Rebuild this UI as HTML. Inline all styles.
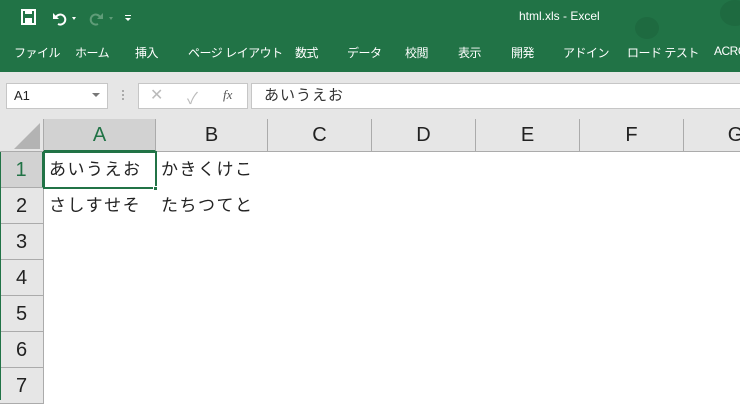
<!DOCTYPE html><html><head><meta charset="utf-8"><style>
*{margin:0;padding:0;box-sizing:border-box}
body{width:740px;height:400px;overflow:hidden;background:#fff;font-family:"Liberation Sans","Noto Sans CJK JP",sans-serif;position:relative}
.a{position:absolute}
.g{background:#217346;left:0;top:0;width:740px;height:72px}
.t{color:#fff;font-size:12px;top:44px;letter-spacing:-0.5px}
.ch{top:119px;height:33px;background:#e6e6e6;border-right:1px solid #ababab;border-bottom:1px solid #ababab;font-size:20px;color:#222;text-align:center;line-height:33px}
.rh{left:0;width:44px;height:36px;background:#e6e6e6;border-bottom:1px solid #ababab;border-right:1px solid #ababab;font-size:20px;color:#222;text-align:center;line-height:36px}
.c{font-size:17px;color:#222;line-height:36px;letter-spacing:1.5px}
</style></head><body>
<div class="a g"></div>
<svg class="a" style="left:20px;top:8px" width="120" height="20">
<rect x="2" y="2" width="13" height="14" fill="none" stroke="#fff" stroke-width="2"/><rect x="5" y="2" width="7" height="4" fill="#fff"/><rect x="5" y="10" width="7" height="6" fill="#fff"/>
<path d="M36 9 a5 5 0 1 1 2 7" fill="none" stroke="#fff" stroke-width="2"/><path d="M33 5 l0 6 l6 0z" fill="#fff"/>
<path d="M52 9 l4 0 l-2 3z" fill="#fff"/>
<path d="M80 9 a5 5 0 1 0 -2 7" fill="none" stroke="#5f9c78" stroke-width="2"/><path d="M83 5 l0 6 l-6 0z" fill="#5f9c78"/>
<path d="M89 9 l4 0 l-2 3z" fill="#5f9c78"/>
<rect x="105" y="7" width="6" height="1" fill="#fff"/><path d="M105 10 l6 0 l-3 3z" fill="#fff"/>
</svg>
<div class="a" style="left:519px;top:9px;color:#fff;font-size:12px">html.xls - Excel</div>
<div class="a" style="left:635px;top:17px;width:24px;height:22px;border-radius:50%;background:#1e6a40"></div>
<div class="a" style="left:720px;top:0;width:30px;height:26px;border-radius:50%;background:#1e6a40"></div>
<div class="a t" style="left:14px">ファイル</div>
<div class="a t" style="left:75px">ホーム</div>
<div class="a t" style="left:135px">挿入</div>
<div class="a t" style="left:188px">ページ レイアウト</div>
<div class="a t" style="left:295px">数式</div>
<div class="a t" style="left:347px">データ</div>
<div class="a t" style="left:405px">校閲</div>
<div class="a t" style="left:458px">表示</div>
<div class="a t" style="left:511px">開発</div>
<div class="a t" style="left:563px">アドイン</div>
<div class="a t" style="left:627px">ロード テスト</div>
<div class="a t" style="left:714px">ACRO</div>
<div class="a" style="left:0;top:72px;width:740px;height:47px;background:#e6e6e6"></div>
<div class="a" style="left:6px;top:83px;width:102px;height:26px;background:#fff;border:1px solid #c6c6c6;font-size:13px;line-height:24px;padding-left:7px;color:#222">A1</div>
<svg class="a" style="left:92px;top:93px" width="10" height="6"><path d="M0 0h8l-4 4z" fill="#777"/></svg>
<div class="a" style="left:122px;top:90px;width:2px;height:2px;background:#aaa;box-shadow:0 4px #aaa,0 8px #aaa"></div>
<div class="a" style="left:138px;top:83px;width:110px;height:26px;background:#fff;border:1px solid #c6c6c6"></div>
<div class="a" style="left:150px;top:85px;color:#bbb;font-size:16px">✕</div>
<div class="a" style="left:187px;top:85px;color:#bbb;font-size:16px">✓</div>
<div class="a" style="left:223px;top:87px;color:#555;font-size:13px;font-style:italic;font-family:'Liberation Serif',serif">fx</div>
<div class="a" style="left:251px;top:83px;width:500px;height:26px;background:#fff;border:1px solid #c6c6c6;font-size:15px;line-height:24px;padding-left:12px;color:#333;letter-spacing:1px">あいうえお</div>
<div class="a" style="left:0;top:119px;width:44px;height:33px;background:#e6e6e6;border-right:1px solid #ababab;border-bottom:1px solid #ababab"></div>
<svg class="a" style="left:14px;top:123px" width="28" height="28"><path d="M26 0V26H0z" fill="#b3b3b3"/></svg>
<div class="a ch" style="left:44px;width:112px;background:#d2d2d2;color:#217346;border-bottom:2px solid #217346">A</div>
<div class="a ch" style="left:156px;width:112px">B</div>
<div class="a ch" style="left:268px;width:104px">C</div>
<div class="a ch" style="left:372px;width:104px">D</div>
<div class="a ch" style="left:476px;width:104px">E</div>
<div class="a ch" style="left:580px;width:104px">F</div>
<div class="a ch" style="left:684px;width:104px">G</div>
<div class="a rh" style="top:152px;background:#d2d2d2;color:#217346;border-right:2px solid #217346">1</div>
<div class="a rh" style="top:188px">2</div>
<div class="a rh" style="top:224px">3</div>
<div class="a rh" style="top:260px">4</div>
<div class="a rh" style="top:296px">5</div>
<div class="a rh" style="top:332px">6</div>
<div class="a rh" style="top:368px">7</div>
<div class="a" style="left:0;top:152px;width:1px;height:248px;background:#217346"></div>
<div class="a" style="left:43px;top:151px;width:114px;height:38px;border:2px solid #217346"></div>
<div class="a" style="left:153px;top:186px;width:5px;height:5px;background:#217346;border:1px solid #fff"></div>
<div class="a c" style="left:49px;top:152px">あいうえお</div>
<div class="a c" style="left:161px;top:152px">かきくけこ</div>
<div class="a c" style="left:49px;top:188px">さしすせそ</div>
<div class="a c" style="left:161px;top:188px">たちつてと</div>
</body></html>
